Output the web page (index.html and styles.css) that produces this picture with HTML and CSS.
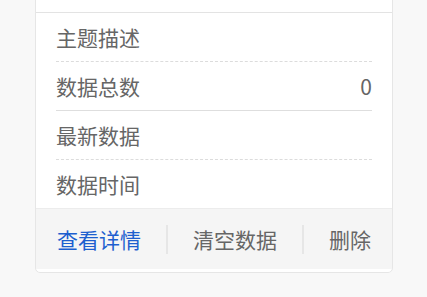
FILE: index.html
```html
<!DOCTYPE html>
<html lang="zh-CN">
<head>
    <meta charset="UTF-8">
    <meta name="viewport" content="width=device-width, initial-scale=1.0">
    <title>主题卡片</title>
    <link rel="stylesheet" href="styles.css">
</head>
<body>
    <div class="card">
        <div class="card-head"></div>

        <ul class="info-list">
            <li class="info-row dashed">
                <span class="label">主题描述</span>
                <span class="value"></span>
            </li>
            <li class="info-row">
                <span class="label">数据总数</span>
                <span class="value">0</span>
            </li>
            <li class="info-row dashed">
                <span class="label">最新数据</span>
                <span class="value"></span>
            </li>
            <li class="info-row last">
                <span class="label">数据时间</span>
                <span class="value"></span>
            </li>
        </ul>

        <div class="card-actions">
            <a class="action primary" href="#">查看详情</a>
            <span class="divider"></span>
            <a class="action" href="#">清空数据</a>
            <span class="divider"></span>
            <a class="action" href="#">删除</a>
        </div>
    </div>
</body>
</html>
```

FILE: styles.css
```css
body {
    margin: 0;
    background-color: #f8f8f8;
    font-family: "Microsoft YaHei", "Noto Sans CJK SC", sans-serif;
}
.card {
    margin: -40px 34px 0 35px;
    background-color: #fff;
    border: 1px solid #e6e6e6;
    border-radius: 5px;
    padding-bottom: 3px;
}
.card-head {
    height: 51px;
    border-bottom: 1px solid #e3e3e3;
}
.info-list {
    list-style: none;
    margin: 0;
    padding: 0 20px;
}
.info-row {
    display: flex;
    justify-content: space-between;
    align-items: center;
    height: 48px;
    border-bottom: 1px solid #dedede;
    font-size: 21px;
    color: #666;
}
.info-row.dashed {
    border-bottom: 1px dashed #dcdcdc;
}
.info-row.last {
    border-bottom: none;
}
.card-actions {
    display: flex;
    justify-content: space-between;
    align-items: center;
    height: 60px;
    padding: 0 21px;
    background-color: #f5f5f5;
    border-top: 1px solid #ececec;
}
.action {
    font-size: 21px;
    color: #666;
    text-decoration: none;
}
.action.primary {
    color: #1d5fcf;
}
.divider {
    width: 2px;
    height: 29px;
    background-color: #e6e6e6;
}
```
